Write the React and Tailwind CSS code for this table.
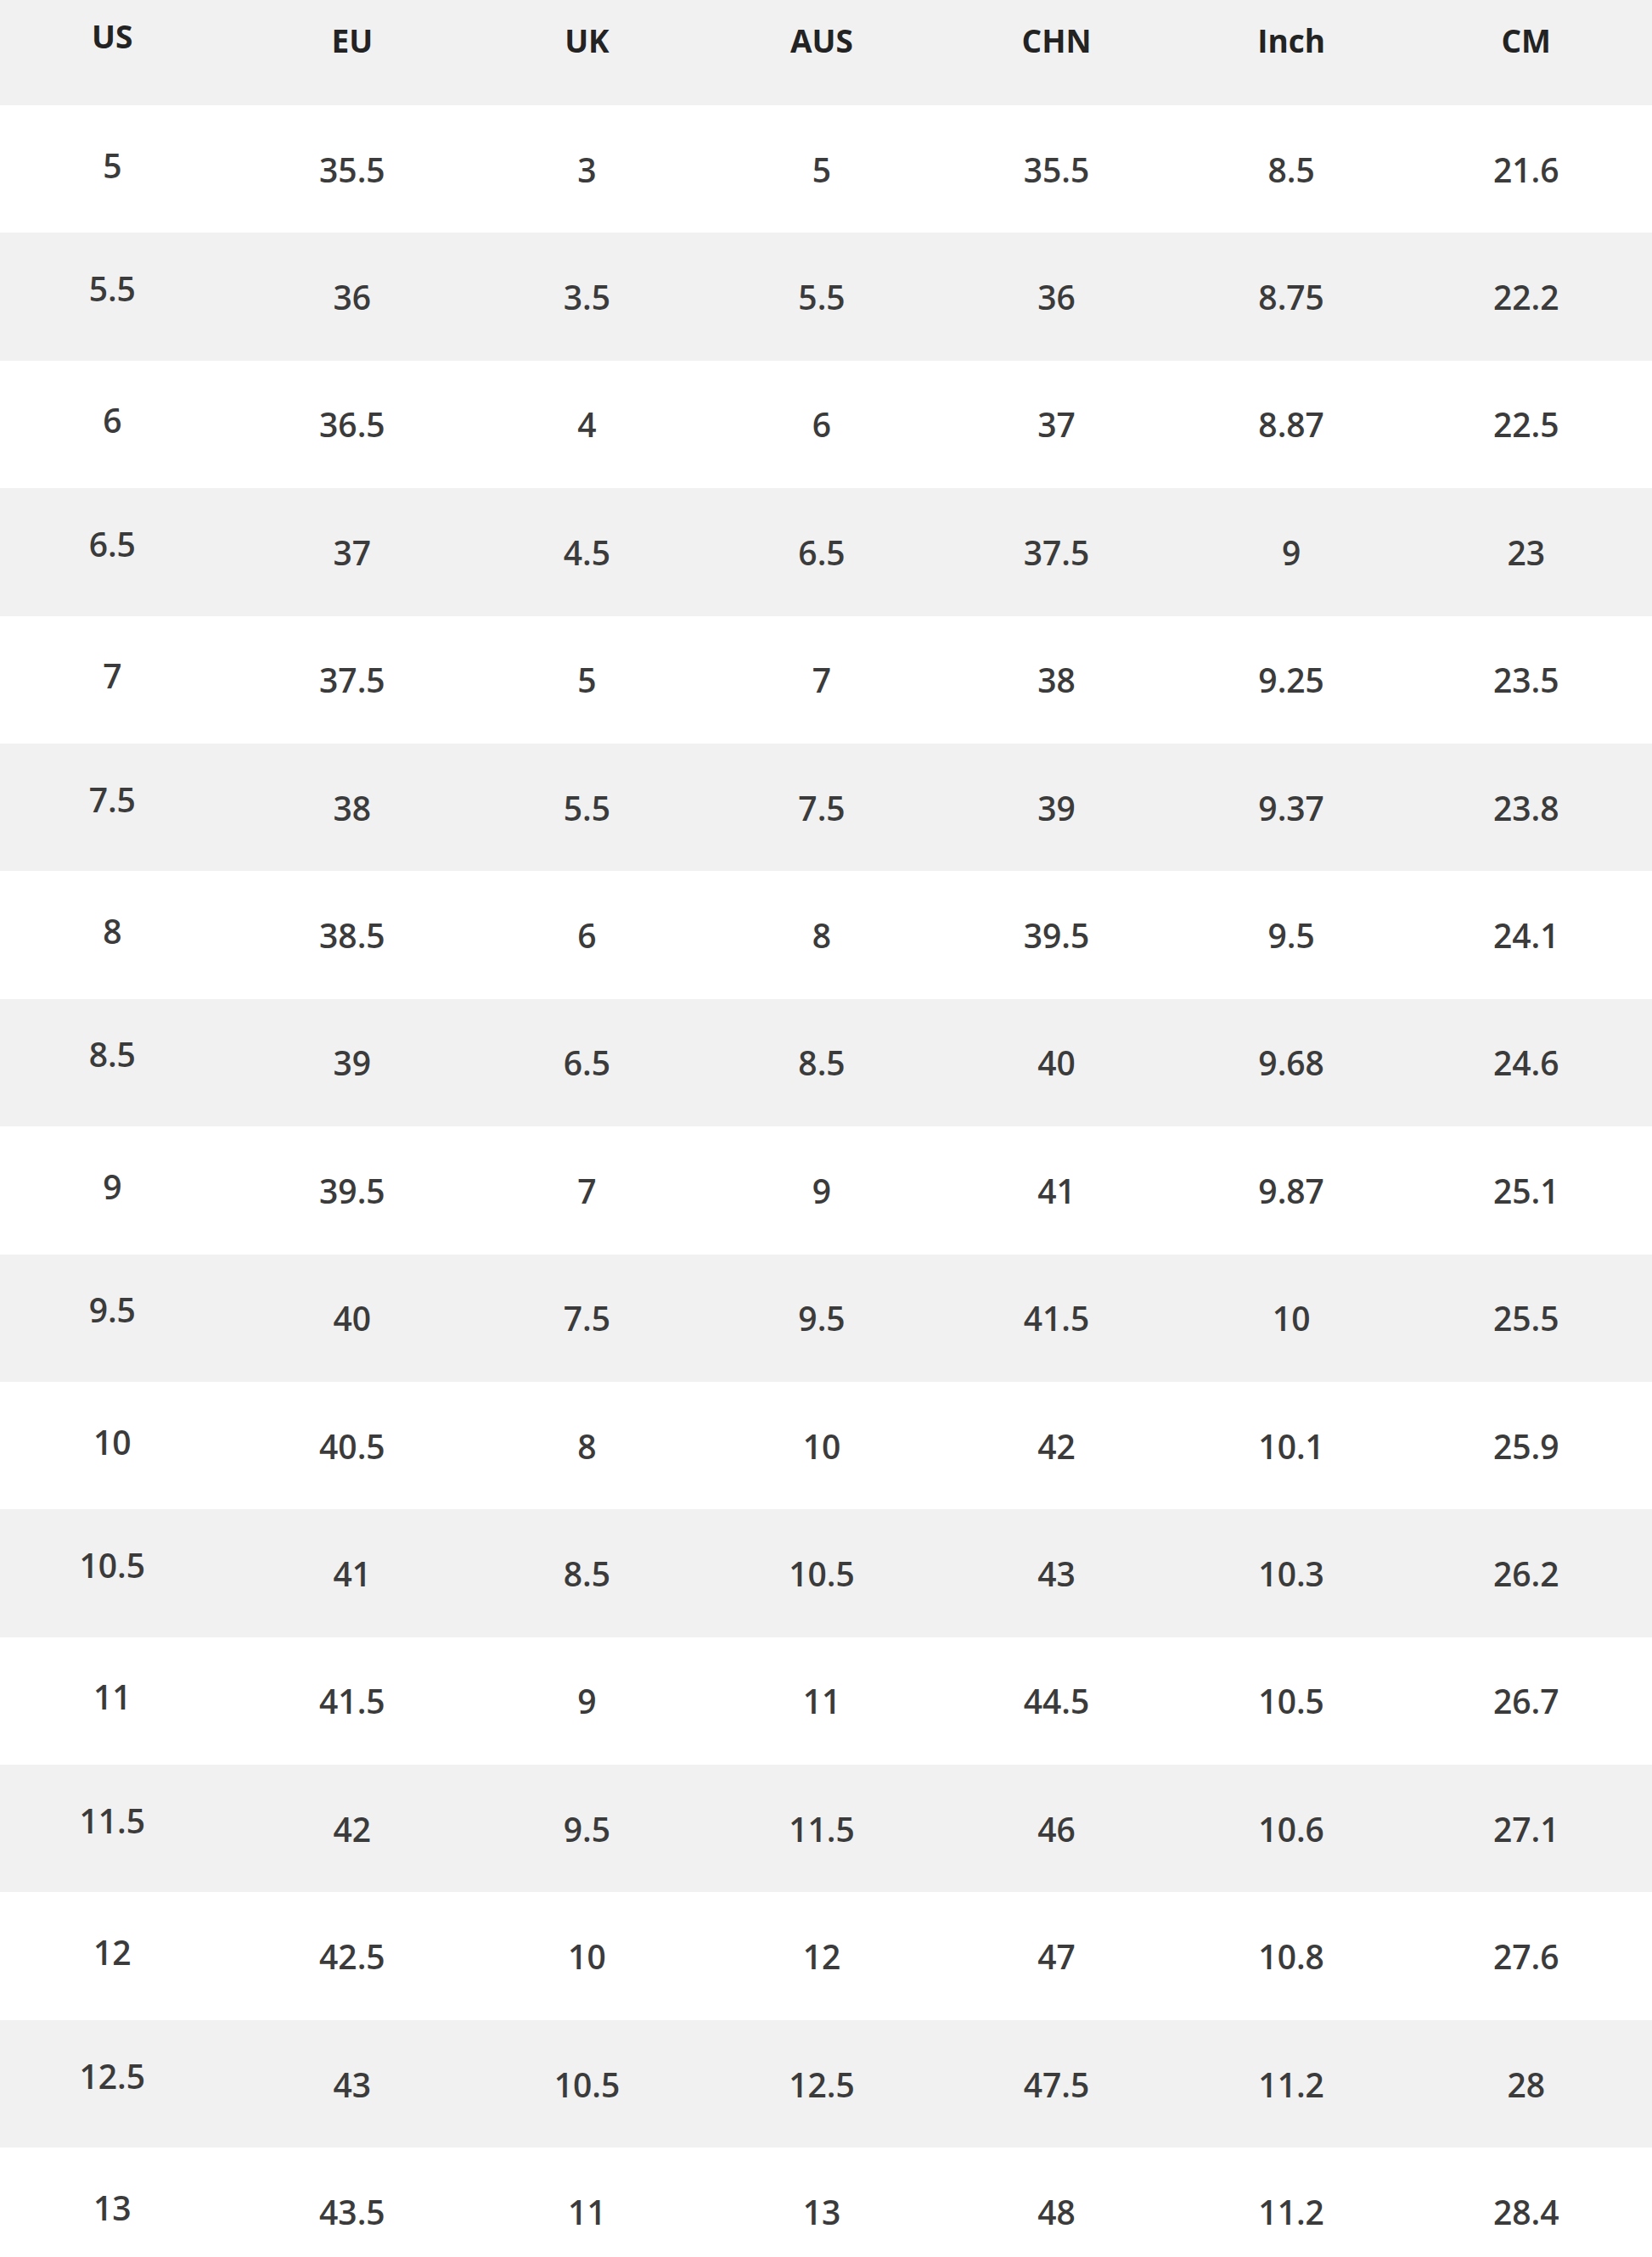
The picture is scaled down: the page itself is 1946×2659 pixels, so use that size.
import React from 'react';

const headers = ['US', 'EU', 'UK', 'AUS', 'CHN', 'Inch', 'CM'];

const rows = [
  ['5', '35.5', '3', '5', '35.5', '8.5', '21.6'],
  ['5.5', '36', '3.5', '5.5', '36', '8.75', '22.2'],
  ['6', '36.5', '4', '6', '37', '8.87', '22.5'],
  ['6.5', '37', '4.5', '6.5', '37.5', '9', '23'],
  ['7', '37.5', '5', '7', '38', '9.25', '23.5'],
  ['7.5', '38', '5.5', '7.5', '39', '9.37', '23.8'],
  ['8', '38.5', '6', '8', '39.5', '9.5', '24.1'],
  ['8.5', '39', '6.5', '8.5', '40', '9.68', '24.6'],
  ['9', '39.5', '7', '9', '41', '9.87', '25.1'],
  ['9.5', '40', '7.5', '9.5', '41.5', '10', '25.5'],
  ['10', '40.5', '8', '10', '42', '10.1', '25.9'],
  ['10.5', '41', '8.5', '10.5', '43', '10.3', '26.2'],
  ['11', '41.5', '9', '11', '44.5', '10.5', '26.7'],
  ['11.5', '42', '9.5', '11.5', '46', '10.6', '27.1'],
  ['12', '42.5', '10', '12', '47', '10.8', '27.6'],
  ['12.5', '43', '10.5', '12.5', '47.5', '11.2', '28'],
  ['13', '43.5', '11', '13', '48', '11.2', '28.4'],
];

const SizeChart = () => {
  return (
    <div className="w-full bg-white font-['Open_Sans',sans-serif]">
      {/* header row */}
      <div className="grid grid-cols-7 h-[124px] pb-[30px] pr-[10px] bg-[#f1f1f1] text-[#232323] text-[37px] font-bold leading-none">
        {headers.map((h, i) => (
          <div key={h} className={`flex items-center justify-center ${i === 0 ? '-translate-y-[5px] -translate-x-[6px]' : ''}`}>
            {h}
          </div>
        ))}
      </div>

      {rows.map((row, r) => {
        const shaded = r % 2 === 1;
        return (
          <div
            key={row[0]}
            className={`grid grid-cols-7 h-[150.4px] pr-[10px] text-[39px] font-semibold leading-none text-[#3b3b3b] ${shaded ? 'bg-[#f1f1f1]' : 'bg-white'}`}
          >
            {row.map((v, i) => (
              <div
                key={i}
                className={`flex items-center justify-center ${i === 0 ? (shaded ? '-translate-y-[10px] -translate-x-[6px]' : '-translate-y-[5px] -translate-x-[6px]') : ''}`}
              >
                {v}
              </div>
            ))}
          </div>
        );
      })}
    </div>
  );
};

export default function App() {
  return <SizeChart />;
}
